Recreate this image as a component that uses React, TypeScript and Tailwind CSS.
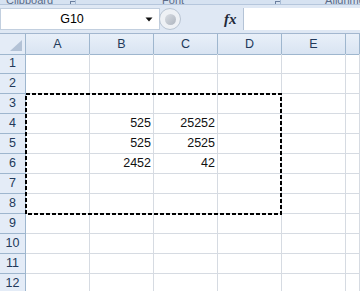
import React from "react";

const COLS = ["A", "B", "C", "D", "E", ""];
const ROWS = [1, 2, 3, 4, 5, 6, 7, 8, 9, 10, 11, 12];

const DATA: Record<number, string[]> = {
  4: ["", "525", "25252"],
  5: ["", "525", "2525"],
  6: ["", "2452", "42"],
};

const font = "font-['Liberation_Sans',Arial,sans-serif]";

const RibbonLabels = () => (
  <div className="relative h-[5px] overflow-hidden border-b border-[#b5c6dc] bg-[#d6e2f1]">
    <div className="flex h-[4px] items-end text-[11px] leading-[11px] text-[#5a6b88]">
      <div className="flex h-[4px] w-[82px] items-end border-r border-[#a9bdd6]">
        <span className="ml-[6px] -mb-[2px]">Clipboard</span>
        <span className="ml-[17px] h-[3px] w-[5px] border-l border-t border-[#6b7f9f]" />
      </div>
      <div className="flex h-[4px] w-[215px] items-end border-r border-[#a9bdd6]">
        <span className="ml-[86px] -mb-[2px]">Font</span>
        <span className="ml-[91px] h-[3px] w-[5px] border-l border-t border-[#6b7f9f]" />
      </div>
      <span className="ml-[44px] -mb-[2px]">Alignment</span>
    </div>
  </div>
);

const FormulaBar = () => (
  <div className="flex h-[29px] items-center border-b border-[#a3b7cf] bg-[#dfe8f4]">
    <div className="flex h-[22px] w-[160px] items-center border border-[#c2cfdf] bg-white">
      <span className="w-[142px] text-center text-[12.5px] text-black">G10</span>
      <svg width="8" height="5" viewBox="0 0 8 5" className="ml-[2px]">
        <path d="M0.5 0.5 L7.5 0.5 L4 4.5 Z" fill="#111" />
      </svg>
    </div>
    <div className="-ml-[1px] flex h-[22px] w-[22px] items-center justify-center rounded-full border border-[#b8c4d2] bg-[#eef1f5]">
      <div className="h-[11px] w-[11px] rounded-full bg-gradient-to-br from-[#d9dde3] to-[#aeb5bf]" />
    </div>
    <span className="ml-[43px] font-['Liberation_Serif',serif] text-[15px] font-bold italic text-[#1f2a3a]">
      fx
    </span>
    <div className="ml-[6px] h-[22px] flex-1 border-l border-[#b4c3d6] bg-white" />
  </div>
);

export default function App() {
  return (
    <div className={`relative h-[291px] w-[360px] overflow-hidden bg-white ${font}`}>
      <RibbonLabels />
      <FormulaBar />

      <div className="grid grid-cols-[26px_repeat(5,64px)_1fr] auto-rows-[20px]">
        {/* corner */}
        <div className="relative h-[21px] border-r border-b border-[#9eb6ce] bg-[#e4ecf7]">
          <svg width="12" height="11" className="absolute right-[3px] bottom-[3px]" viewBox="0 0 12 11">
            <path d="M12 0 L12 11 L0 11 Z" fill="#b3c2d6" />
          </svg>
        </div>
        {COLS.map((c, i) => (
          <div
            key={i}
            className="flex h-[21px] items-center justify-center border-r border-b border-[#9eb6ce] bg-gradient-to-b from-[#e9f0f9] to-[#d9e4f2] text-[12.5px] text-[#22395a]"
          >
            {c}
          </div>
        ))}

        {ROWS.map((r) => (
          <React.Fragment key={r}>
            <div className="flex items-center justify-center border-r border-b border-[#9eb6ce] bg-[#e4ecf7] text-[12.5px] text-[#22395a]">
              {r}
            </div>
            {COLS.map((_, ci) => (
              <div
                key={ci}
                className="flex items-center justify-end border-r border-b border-[#d6dbe2] pr-[2px] text-[12.5px] text-[#111]"
              >
                {DATA[r]?.[ci] ?? ""}
              </div>
            ))}
          </React.Fragment>
        ))}
      </div>

      {/* copy marquee over A3:D8 */}
      <svg
        className="absolute left-[25px] top-[93px]"
        width="258"
        height="122"
        viewBox="0 0 258 122"
      >
        <rect
          x="1"
          y="1"
          width="255"
          height="120"
          fill="none"
          stroke="#000"
          strokeWidth="2"
          strokeDasharray="4 2"
        />
      </svg>
    </div>
  );
}
